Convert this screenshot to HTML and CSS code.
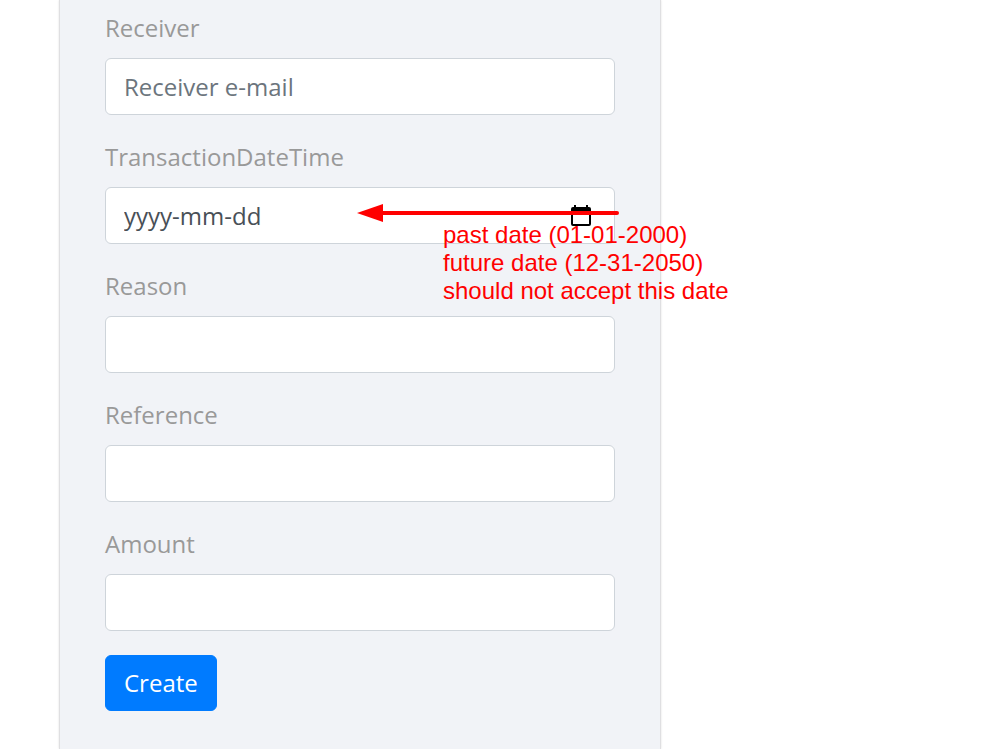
FILE: index.html
```html
<!DOCTYPE html>
<html lang="en">
<head>
<meta charset="utf-8">
<meta name="viewport" content="width=device-width, initial-scale=1">
<title>Create transaction</title>
<link rel="stylesheet" href="styles.css">
</head>
<body>
<main class="page">
  <form class="card">
    <div class="field">
      <label class="label" for="receiver">Receiver</label>
      <input class="control" id="receiver" type="text" placeholder="Receiver e-mail">
    </div>
    <div class="field">
      <label class="label" for="datetime">TransactionDateTime</label>
      <div class="date">
        <input class="control control-date" id="datetime" type="text" placeholder="yyyy-mm-dd">
        <svg class="calendar" viewBox="0 0 22 24" aria-hidden="true">
          <path fill="#000" fill-rule="evenodd" d="M4 1h2v2h10V1h2v2h1a2 2 0 0 1 2 2v15a2 2 0 0 1-2 2H3a2 2 0 0 1-2-2V5a2 2 0 0 1 2-2h1zM3 8v12h16V8z"/>
        </svg>
        <div class="note">
          <svg class="arrow" viewBox="0 1 264 18" aria-hidden="true">
            <path d="M24 10H260" stroke="#f00" stroke-width="4" stroke-linecap="round"/>
            <path d="M0 10L26 1V19z" fill="#f00"/>
          </svg>
          <p class="note-text">past date (01-01-2000)<br>future date (12-31-2050)<br>should not accept this date</p>
        </div>
      </div>
    </div>
    <div class="field">
      <label class="label" for="reason">Reason</label>
      <input class="control" id="reason" type="text">
    </div>
    <div class="field">
      <label class="label" for="reference">Reference</label>
      <input class="control" id="reference" type="text">
    </div>
    <div class="field">
      <label class="label" for="amount">Amount</label>
      <input class="control" id="amount" type="text">
    </div>
    <button class="submit" type="submit">Create</button>
  </form>
</main>
</body>
</html>
```
FILE: styles.css
```css
* {
  box-sizing: border-box;
}

body {
  margin: 0;
  background: #fff;
  font: 24px/36px "Open Sans", sans-serif;
}

.page {
  display: flex;
  min-height: 100vh;
  padding-left: 59px;
}

.card {
  flex: 0 1 602px;
  min-width: 0;
  padding: 10px 45px 38px;
  background: #f1f3f7;
  border: solid #dfdfe1;
  border-width: 0 1px;
  box-shadow: 0 0 2px rgba(0, 0, 0, 0.12);
}

.field {
  margin-bottom: 24px;
}

.label {
  display: block;
  margin-bottom: 12px;
  color: #999;
}

.control {
  display: block;
  width: 100%;
  height: 57px;
  padding: 9px 18px;
  border: 1px solid #ced4da;
  border-radius: 6px;
  background: #fff;
  color: #495057;
  font: inherit;
}

.control::placeholder {
  color: #6c757d;
  opacity: 1;
}

.control-date::placeholder {
  color: #495057;
}

.date {
  position: relative;
}

.calendar {
  position: absolute;
  top: 17px;
  right: 23px;
  width: 22px;
  height: 24px;
}

.note {
  position: absolute;
  top: 17px;
  left: 252px;
  color: #f00;
  font: 24px/28px "Liberation Sans", Arial, sans-serif;
  white-space: nowrap;
}

.arrow {
  display: block;
  width: 264px;
  height: 18px;
}

.note-text {
  margin: -1px 0 0;
  padding-left: 86px;
}

.submit {
  height: 56px;
  padding: 0 18px;
  border: 1px solid #007bff;
  border-radius: 6px;
  background: #007bff;
  color: #fff;
  font: inherit;
}
```
